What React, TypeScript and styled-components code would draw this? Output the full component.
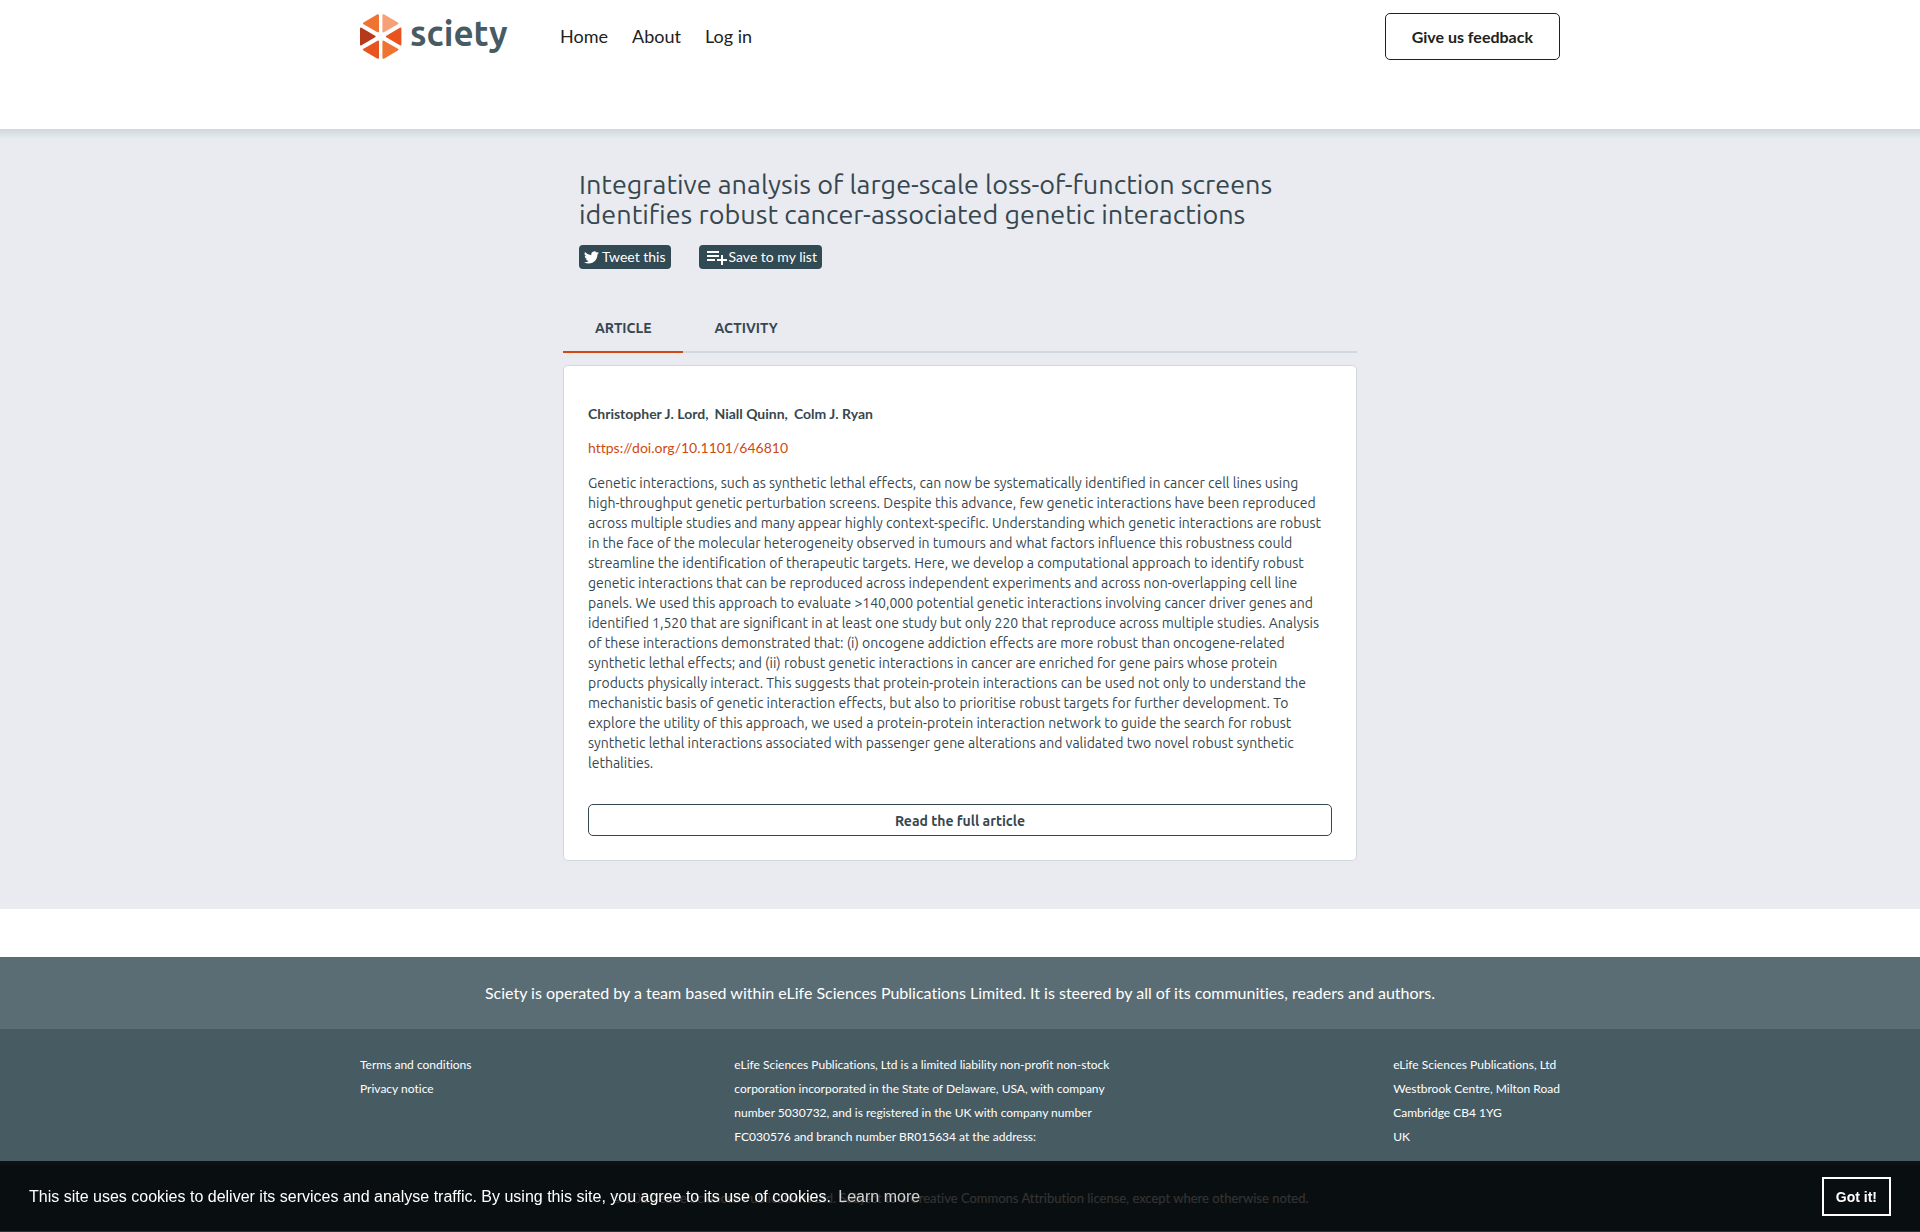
import React from "react";
import styled, { createGlobalStyle } from "styled-components";

const ink = "#37474f";
const slate = "#475b63";
const deepSlate = "#314a53";
const rule = "#cfd8dc";
const accent = "#cf4a12";
const lato = 'Lato, "Open Sans", sans-serif';
const ubuntu = 'Ubuntu, "Noto Sans", sans-serif';
const arial = '"Liberation Sans", Arial, Helvetica, sans-serif';

const GlobalStyle = createGlobalStyle`
  *, *::before, *::after { box-sizing: border-box; }
  body {
    margin: 0;
    background: #fff;
    color: ${ink};
    font-family: ${lato};
    font-size: 14px;
    line-height: 24px;
    font-variant-ligatures: no-common-ligatures;
  }
  h1, p, ul, ol { margin: 0; padding: 0; }
  ul, ol { list-style: none; }
  a { color: inherit; text-decoration: none; }
  button { font: inherit; cursor: pointer; }
`;

const Container = styled.div`
  width: 100%;
  max-width: 1200px;
  margin: 0 auto;
`;

const Header = styled.header`
  padding: 13px 0 69px;
  background: #fff;
`;

const HeaderRow = styled(Container)`
  display: flex;
  align-items: center;
`;

const LogoLink = styled.a`
  display: flex;
  align-items: center;
  gap: 8px;
  width: 200px;
  height: 47px;
`;

const Wordmark = styled.span`
  color: ${slate};
  font: 700 35px/40px ${ubuntu};
  padding-bottom: 8px;
`;

const NavList = styled.ul`
  display: flex;
  gap: 24px;
  padding-bottom: 2px;
  color: #212121;
  font-size: 18px;
`;

const FeedbackLink = styled.a`
  margin-left: auto;
  padding: 11px 26px 10px;
  border: 1px solid #212121;
  border-radius: 5px;
  color: #212121;
  font-size: 16px;
  font-weight: 700;
`;

const Main = styled.main`
  padding: 40px 0 48px;
  background: linear-gradient(${rule}, #e9ebf0 10px);
`;

const Article = styled.article`
  width: 100%;
  max-width: 794px;
  margin: 0 auto;
`;

const ArticleHeader = styled.header`
  padding: 0 16px;
`;

const Title = styled.h1`
  font: 400 27px/30px ${ubuntu};
`;

const Actions = styled.div`
  display: flex;
  gap: 28px;
  margin-top: 16px;
`;

const actionStyles = `
  display: flex;
  align-items: center;
  height: 24px;
  padding: 0 5px;
  border: 0;
  border-radius: 4px;
  background: ${deepSlate};
  color: #fff;
  font-size: 14px;
  line-height: 24px;
`;

const TweetLink = styled.a`
  ${actionStyles}
  gap: 3px;
`;

const SaveButton = styled.button`
  ${actionStyles}
`;

const Tabs = styled.ul`
  display: flex;
  margin: 35px 0 12px;
  border-bottom: 2px solid ${rule};
`;

const Tab = styled.li<{ $active?: boolean }>`
  margin-bottom: -2px;
  padding: 12px 31px 11px 32px;
  border-bottom: 2px solid ${(p) => (p.$active ? accent : "transparent")};
  font: 700 14px/24px ${ubuntu};
  text-transform: uppercase;
`;

const Card = styled.section`
  padding: 36px 24px 24px;
  border: 1px solid ${rule};
  border-radius: 5px;
  background: #fff;
`;

const Authors = styled.ol`
  display: flex;
  gap: 6px;
  font-weight: 700;
`;

const Doi = styled.p`
  margin: 10px 0 13px;
  color: ${accent};
`;

const Abstract = styled.p`
  font: 400 14px/20px ${ubuntu};
`;

const ReadLink = styled.a`
  display: block;
  margin-top: 31px;
  padding: 4px 3px 2px;
  border: 1px solid ${ink};
  border-radius: 5px;
  font: 700 14px/24px ${ubuntu};
  text-align: center;
`;

const Operated = styled.p`
  margin-top: 48px;
  padding: 24px;
  background: #5b6d74;
  color: #fff;
  font-size: 16px;
  text-align: center;
`;

const Legal = styled.div`
  padding: 24px 0 16px;
  background: ${slate};
  color: #fff;
  font-size: 12px;
`;

const LegalRow = styled(Container)`
  display: flex;
  justify-content: space-between;
`;

const Company = styled.p`
  width: 396px;
  padding-right: 20px;
`;

const Copyright = styled.p`
  padding: 21px 0;
  background: ${deepSlate};
  color: #fff;
  font-size: 13px;
  text-align: center;
`;

const CookieBar = styled.aside`
  position: fixed;
  right: 0;
  bottom: 0;
  left: 0;
  display: flex;
  align-items: center;
  justify-content: space-between;
  padding: 16px 29px;
  background: rgba(0, 0, 0, 0.8);
  color: #fff;
  font: 16px/24px ${arial};
`;

const LearnMore = styled.a`
  padding: 3px;
  opacity: 0.8;
`;

const Dismiss = styled.button`
  padding: 6px 12px 5px;
  border: 2px solid #fff;
  background: transparent;
  color: #fff;
  font: 700 14px/24px ${arial};
`;

const segments = [
  { points: "4,9.4 18,1.2 18,17.4", color: "#ef7333" },
  { points: "37.4,9.4 23.4,1.2 23.4,17.4", color: "#f5a077" },
  { points: "1,14.6 14.6,22.5 1,30.4", color: "#b5391a" },
  { points: "40.4,14.6 26.8,22.5 40.4,30.4", color: "#e8541f" },
  { points: "4,35.6 18,43.8 18,27.6", color: "#e8541f" },
  { points: "37.4,35.6 23.4,43.8 23.4,27.6", color: "#ef7333" },
];

const LogoMark = () => (
  <svg width="42" height="45" viewBox="0 0 42 45" aria-hidden="true">
    {segments.map(({ points, color }) => (
      <polygon
        key={points}
        points={points}
        fill={color}
        stroke={color}
        strokeWidth="2"
        strokeLinejoin="round"
      />
    ))}
  </svg>
);

const TwitterIcon = () => (
  <svg width="15" height="15" viewBox="0 0 24 24" fill="#fff" aria-hidden="true">
    <path d="M24 4.6a10 10 0 0 1-2.8.8 5 5 0 0 0 2.1-2.7c-.9.5-2 1-3.1 1.2a4.9 4.9 0 0 0-8.4 4.5A14 14 0 0 1 1.700 3.100a4.900 4.900 0 0 0 1.500 6.600 4.900 4.900 0 0 1-2.200-.6v.1a4.900 4.900 0 0 0 4 4.800 5 5 0 0 1-2.200.1 4.900 4.900 0 0 0 4.600 3.400A9.900 9.900 0 0 1 0 19.500a14 14 0 0 0 7.500 2.200c9.100 0 14-7.500 14-14v-.6A10 10 0 0 0 24 4.600z" />
  </svg>
);

const ListAddIcon = () => (
  <svg width="25" height="24" viewBox="0 0 25 24" fill="#fff" aria-hidden="true">
    <path d="M3 6h12v2H3zM3 10h12v2H3zM3 14h8v2H3zM17 10h2v4h4v2h-4v4h-2v-4h-4v-2h4z" />
  </svg>
);

const authors = ["Christopher J. Lord,", "Niall Quinn,", "Colm J. Ryan"];

export default function App() {
  return (
    <>
      <GlobalStyle />
      <Header>
        <HeaderRow>
          <LogoLink href="#" aria-label="Sciety">
            <LogoMark />
            <Wordmark>sciety</Wordmark>
          </LogoLink>
          <nav>
            <NavList>
              <li><a href="#">Home</a></li>
              <li><a href="#">About</a></li>
              <li><a href="#">Log in</a></li>
            </NavList>
          </nav>
          <FeedbackLink href="#">Give us feedback</FeedbackLink>
        </HeaderRow>
      </Header>
      <Main>
        <Article>
          <ArticleHeader>
            <Title>
              Integrative analysis of large-scale loss-of-function screens
              identifies robust cancer-associated genetic interactions
            </Title>
            <Actions>
              <TweetLink href="#"><TwitterIcon />Tweet this</TweetLink>
              <SaveButton type="button"><ListAddIcon />Save to my list</SaveButton>
            </Actions>
          </ArticleHeader>
          <Tabs>
            <Tab $active>Article</Tab>
            <Tab><a href="#">Activity</a></Tab>
          </Tabs>
          <Card>
            <Authors>
              {authors.map((name) => <li key={name}>{name}</li>)}
            </Authors>
            <Doi><a href="#">https://doi.org/10.1101/646810</a></Doi>
            <Abstract>
              Genetic interactions, such as synthetic lethal effects, can now be systematically
              identified in cancer cell lines using high-throughput genetic perturbation screens.
              Despite this advance, few genetic interactions have been reproduced across multiple
              studies and many appear highly context-specific. Understanding which genetic
              interactions are robust in the face of the molecular heterogeneity observed in tumours
              and what factors influence this robustness could streamline the identification of
              therapeutic targets. Here, we develop a computational approach to identify robust
              genetic interactions that can be reproduced across independent experiments and across
              non-overlapping cell line panels. We used this approach to evaluate &gt;140,000
              potential genetic interactions involving cancer driver genes and identified 1,520 that
              are significant in at least one study but only 220 that reproduce across multiple
              studies. Analysis of these interactions demonstrated that: (i) oncogene addiction
              effects are more robust than oncogene-related synthetic lethal effects; and (ii) robust
              genetic interactions in cancer are enriched for gene pairs whose protein products
              physically interact. This suggests that protein-protein interactions can be used not
              only to understand the mechanistic basis of genetic interaction effects, but also to
              prioritise robust targets for further development. To explore the utility of this
              approach, we used a protein-protein interaction network to guide the search for robust
              synthetic lethal interactions associated with passenger gene alterations and validated
              two novel robust synthetic lethalities.
            </Abstract>
            <ReadLink href="#">Read the full article</ReadLink>
          </Card>
        </Article>
      </Main>
      <footer>
        <Operated>
          Sciety is operated by a team based within eLife Sciences Publications Limited. It is
          steered by all of its communities, readers and authors.
        </Operated>
        <Legal>
          <LegalRow>
            <ul>
              <li><a href="#">Terms and conditions</a></li>
              <li><a href="#">Privacy notice</a></li>
            </ul>
            <Company>
              eLife Sciences Publications, Ltd is a limited liability non-profit non-stock
              corporation incorporated in the State of Delaware, USA, with company number 5030732,
              and is registered in the UK with company number FC030576 and branch number BR015634 at
              the address:
            </Company>
            <p>
              eLife Sciences Publications, Ltd<br />
              Westbrook Centre, Milton Road<br />
              Cambridge CB4 1YG<br />
              UK
            </p>
          </LegalRow>
        </Legal>
        <Copyright>
          © 2021 eLife Sciences Publications Ltd. Subject to a Creative Commons Attribution license,
          except where otherwise noted.
        </Copyright>
      </footer>
      <CookieBar aria-label="Cookie consent">
        <p>
          This site uses cookies to deliver its services and analyse traffic. By using this site,
          you agree to its use of cookies. <LearnMore href="#">Learn more</LearnMore>
        </p>
        <Dismiss type="button">Got it!</Dismiss>
      </CookieBar>
    </>
  );
}
